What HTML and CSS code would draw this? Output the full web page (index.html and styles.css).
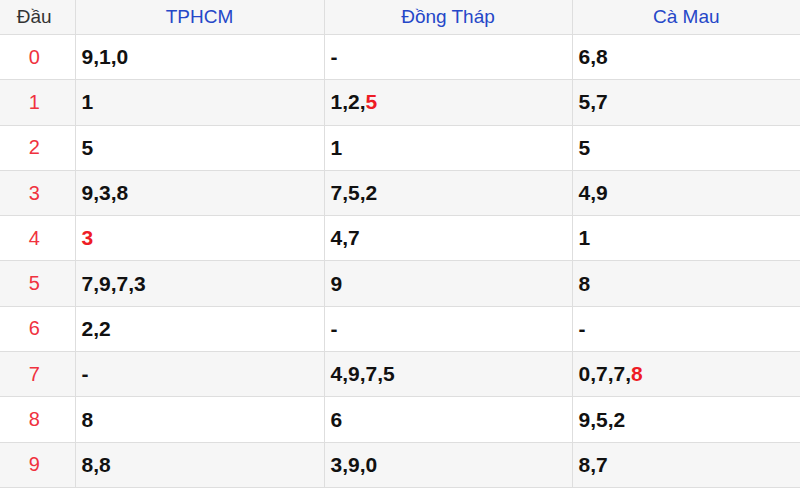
FILE: index.html
```html
<!DOCTYPE html>
<html lang="vi">
<head>
<meta charset="utf-8">
<title>Loto</title>
<link rel="stylesheet" href="styles.css">
</head>
<body>
<table class="loto">
  <colgroup>
    <col class="c-dau">
    <col class="c-a">
    <col class="c-b">
    <col class="c-c">
  </colgroup>
  <thead>
    <tr><th class="dau-h">Đầu</th><th>TPHCM</th><th>Đồng Tháp</th><th>Cà Mau</th></tr>
  </thead>
  <tbody>
    <tr><td class="dau">0</td><td>9,1,0</td><td>-</td><td>6,8</td></tr>
    <tr><td class="dau">1</td><td>1</td><td>1,2,<span class="hl">5</span></td><td>5,7</td></tr>
    <tr><td class="dau">2</td><td>5</td><td>1</td><td>5</td></tr>
    <tr><td class="dau">3</td><td>9,3,8</td><td>7,5,2</td><td>4,9</td></tr>
    <tr><td class="dau">4</td><td><span class="hl">3</span></td><td>4,7</td><td>1</td></tr>
    <tr><td class="dau">5</td><td>7,9,7,3</td><td>9</td><td>8</td></tr>
    <tr><td class="dau">6</td><td>2,2</td><td>-</td><td>-</td></tr>
    <tr><td class="dau">7</td><td>-</td><td>4,9,7,5</td><td>0,7,7,<span class="hl">8</span></td></tr>
    <tr><td class="dau">8</td><td>8</td><td>6</td><td>9,5,2</td></tr>
    <tr><td class="dau">9</td><td>8,8</td><td>3,9,0</td><td>8,7</td></tr>
  </tbody>
</table>
</body>
</html>
```
FILE: styles.css
```css
html, body {
  margin: 0;
  padding: 0;
  background: #fff;
}
.loto {
  width: 800px;
  border-collapse: collapse;
  table-layout: fixed;
  font-family: "Liberation Sans", Arial, sans-serif;
}
.c-dau { width: 75px; }
.c-a { width: 249px; }
.c-b { width: 248px; }
.c-c { width: 228px; }
.loto th, .loto td {
  border: 1px solid #dedede;
  padding: 0 6px;
}
.loto tr > :first-child { border-left: none; }
.loto tr > :last-child { border-right: none; }
.loto thead th {
  border-top: none;
  height: 34px;
  background: #f6f6f6;
  font-weight: normal;
  font-size: 19px;
  color: #2547c8;
  text-align: center;
  vertical-align: middle;
}
.loto thead th.dau-h {
  color: #333;
  padding: 0 9px 0 3px;
}
.loto tbody tr { height: 45.3px; }
.loto tbody tr:nth-child(even) { background: #f6f6f6; }
.loto tbody td {
  font-size: 21px;
  font-weight: bold;
  color: #111;
  text-align: left;
  vertical-align: middle;
}
.loto tbody td.dau {
  text-align: center;
  font-size: 20px;
  font-weight: normal;
  color: #f0323e;
  padding: 0 9px 0 3px;
}
.hl { color: #ee1c25; }
```
